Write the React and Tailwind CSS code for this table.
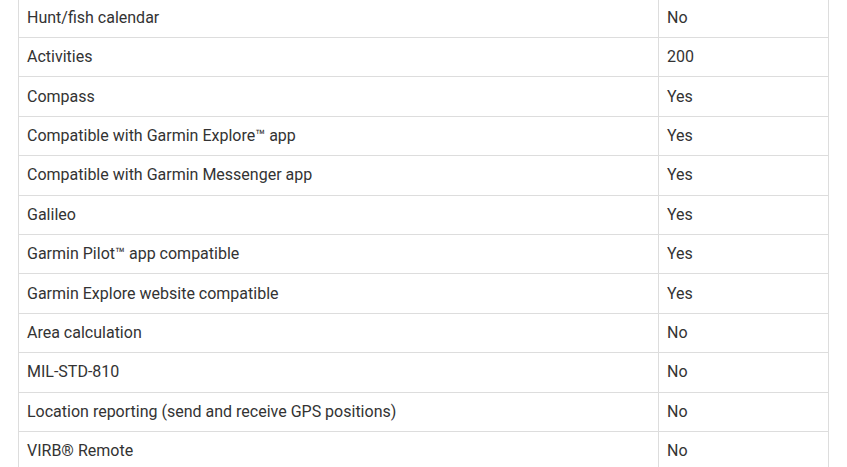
const specs = [
  ["Hunt/fish calendar", "No"],
  ["Activities", "200"],
  ["Compass", "Yes"],
  ["Compatible with Garmin Explore™ app", "Yes"],
  ["Compatible with Garmin Messenger app", "Yes"],
  ["Galileo", "Yes"],
  ["Garmin Pilot™ app compatible", "Yes"],
  ["Garmin Explore website compatible", "Yes"],
  ["Area calculation", "No"],
  ["MIL-STD-810", "No"],
  ["Location reporting (send and receive GPS positions)", "No"],
  ["VIRB® Remote", "No"],
];

export default function App() {
  return (
    <div className="w-[847px] h-[467px] overflow-hidden bg-white">
      <div
        className="mx-[18px] mt-[-1.4px] border-l border-r border-[#dddddd] text-[16px] text-[#333333]"
        style={{ fontFamily: "Roboto, 'Liberation Sans', sans-serif" }}
      >
        {specs.map(([label, value]) => (
          <div key={label} className="flex h-[39.4px] border-b border-[#dddddd]">
            <div className="w-[640px] shrink-0 flex items-center px-2 border-r border-[#dddddd]">
              {label}
            </div>
            <div className="flex-1 flex items-center px-2">{value}</div>
          </div>
        ))}
      </div>
    </div>
  );
}
